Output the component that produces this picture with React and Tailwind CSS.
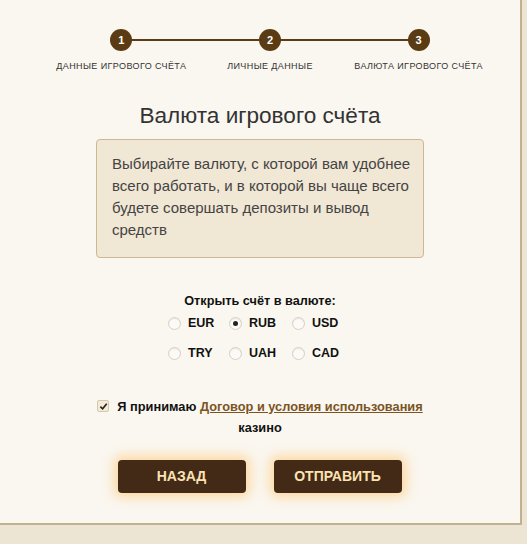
import React, { useState } from "react"

const steps = ["Данные игрового счёта", "Личные данные", "Валюта игрового счёта"]
const currencies = [
  ["EUR", "RUB", "USD"],
  ["TRY", "UAH", "CAD"],
]

function Radio({ checked }) {
  return (
    <span className="flex h-[13px] w-[13px] shrink-0 items-center justify-center rounded-full border border-[#d6d0c4] bg-[#fbfaf7] shadow-[inset_0_1px_1px_rgba(0,0,0,0.08)]">
      {checked && <span className="h-[5px] w-[5px] rounded-full bg-[#222]" />}
    </span>
  )
}

export default function App() {
  const [currency, setCurrency] = useState("RUB")
  const [agree, setAgree] = useState(true)

  return (
    <div className="h-[544px] w-[527px] bg-[#ece5d4] font-['Liberation_Sans',Arial,sans-serif] text-[#333]">
      <div className="h-[525px] w-[522px] border-r-2 border-b-2 border-[#c2b08f] bg-[#faf7f0]">
        {/* stepper */}
        <div className="relative ml-[47px] w-[446px] pt-[29px]">
          <div className="absolute top-[39px] left-[74px] h-[2px] w-[297px] bg-[#5a3c16]" />
          <div className="relative grid grid-cols-3">
            {steps.map((s, i) => (
              <div key={s} className="flex flex-col items-center">
                <div className="flex h-[22px] w-[22px] items-center justify-center rounded-full bg-[#5b3b14] text-[11px] font-bold text-[#fff]">
                  {i + 1}
                </div>
                <div className="mt-[9px] text-[9px] uppercase tracking-[0.4px] text-[#333]">{s}</div>
              </div>
            ))}
          </div>
        </div>

        <h1 className="mt-[29px] text-center text-[22.6px] leading-[26px] text-[#333]">Валюта игрового счёта</h1>

        <div className="mx-auto mt-[10px] h-[119px] w-[328px] rounded-[4px] border border-[#cdb894] bg-[#f1e7d5] pt-[13px] pr-[8px] pl-[15px] text-[15px] leading-[22px] text-[#444]">
          Выбирайте валюту, с которой вам удобнее всего работать, и в которой вы чаще всего будете совершать депозиты и вывод средств
        </div>

        <div className="mt-[34px] text-center text-[12.7px] font-bold text-[#111]">Открыть счёт в валюте:</div>

        <div className="mt-[5px] flex flex-col gap-[14px] pl-[168px]">
          {currencies.map((row) => (
            <div key={row[0]} className="grid w-[180px] grid-cols-[61px_63px_56px] text-[12.5px] font-bold text-[#111]">
              {row.map((c) => (
                <label key={c} className="flex h-[16px] cursor-pointer items-center gap-[7px]" onClick={() => setCurrency(c)}>
                  <Radio checked={currency === c} />
                  <span>{c}</span>
                </label>
              ))}
            </div>
          ))}
        </div>

        <div className="mt-[35px] flex items-center justify-center gap-[8px] text-[12.8px] font-bold text-[#111]">
          <button
            onClick={() => setAgree(!agree)}
            className="flex h-[12px] w-[12px] items-center justify-center rounded-[2px] border border-[#d3c7ae] bg-[#f3ead8]"
          >
            {agree && (
              <svg width="9" height="9" viewBox="0 0 10 10">
                <path d="M1.5 5.2 L4 7.6 L8.6 2" fill="none" stroke="#222" strokeWidth="1.8" />
              </svg>
            )}
          </button>
          <span>
            Я принимаю <a href="#" className="text-[#7b5424] underline">Договор и условия использования</a>
          </span>
        </div>
        <div className="mt-[2px] text-center text-[12.8px] font-bold text-[#111]">казино</div>

        <div className="mt-[23px] flex justify-center gap-[28px] pr-[1px]">
          <button className="h-[33px] w-[128px] rounded-[4px] bg-[#432a17] text-[14px] font-bold text-[#fbe3b4] shadow-[0_0_12px_4px_rgba(255,186,80,0.5)]">
            НАЗАД
          </button>
          <button className="h-[33px] w-[128px] rounded-[4px] bg-[#432a17] text-[14px] font-bold text-[#fbe3b4] shadow-[0_0_12px_4px_rgba(255,186,80,0.5)]">
            ОТПРАВИТЬ
          </button>
        </div>
      </div>
    </div>
  )
}
